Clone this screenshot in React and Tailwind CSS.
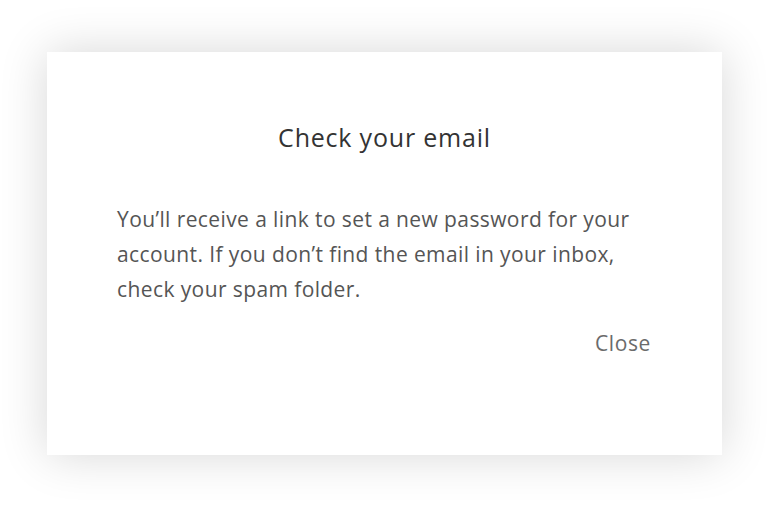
export default function App() {
  return (
    <div className="min-h-[508px] w-[769px] bg-white pt-[52px] pl-[47px] font-['Open_Sans',sans-serif]">
      <div className="w-[675px] h-[403px] bg-white shadow-[0_0_45px_rgba(0,0,0,0.16)] flex flex-col px-[70px]">
        <h2 className="mt-[66px] text-center text-[25px] leading-[38px] tracking-[0.8px] text-[#333333]">Check your email</h2>
        <p className="mt-[46px] text-[21px] leading-[35px] tracking-[0.4px] text-[#555555]">
          You’ll receive a link to set a new password for your account. If you don’t find the email in your inbox, check your spam folder.
        </p>
        <div className="mt-[21px] flex justify-end pr-[1px]">
          <button className="text-[21px] leading-[30px] tracking-[0.6px] text-[#6b6b6b]">Close</button>
        </div>
      </div>
    </div>
  )
}
